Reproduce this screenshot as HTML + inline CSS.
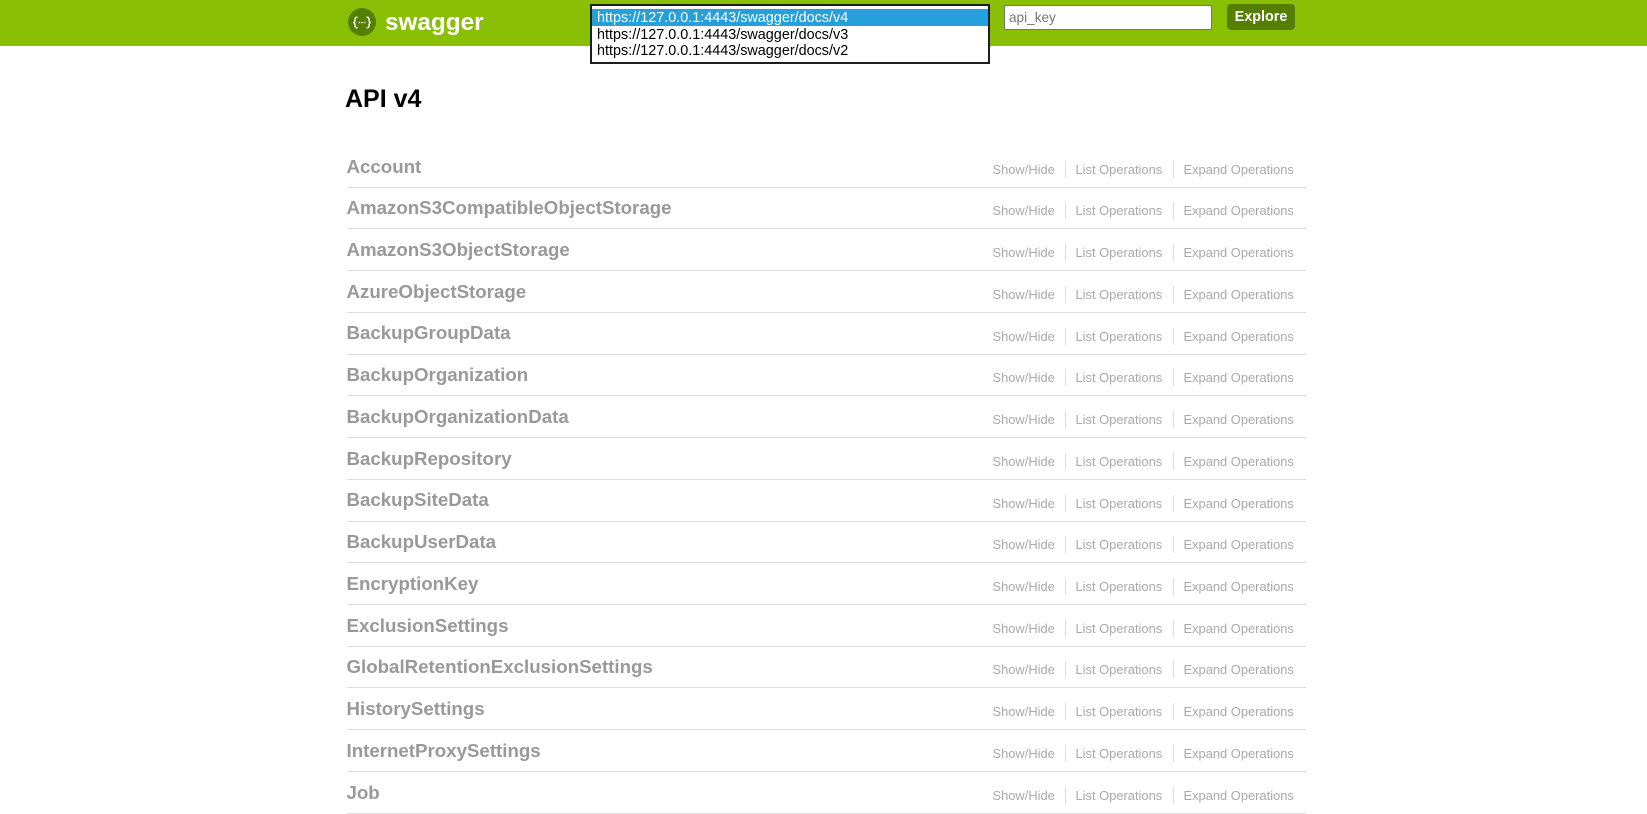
<!DOCTYPE html>
<html lang="en">
<head>
<meta charset="utf-8">
<title>Swagger UI</title>
<style>
html,body{margin:0;padding:0;width:1647px;height:814px;overflow:hidden;background:#fff;font-family:"Liberation Sans",sans-serif}
.hd{position:absolute;left:0;top:0;width:1647px;height:46px;background:#89bf04}
.logo{position:absolute;left:348px;top:8px;width:28px;height:28px}
.brand{position:absolute;left:385px;top:8px;font:bold 24.3px/30px "Liberation Sans",sans-serif;color:#fff}
.sel{position:absolute;left:590px;top:4px;width:396px;height:55.5px;border:2px solid #1e1e1e;background:#fff;font-size:14.4px;color:#000}
.sel div{height:16.5px;line-height:18px;padding-left:5px;white-space:nowrap}
.sel div:first-child{background:#26a0da;color:#fff;margin-top:3px}
.key{position:absolute;left:1004px;top:5px;width:202px;height:23px;border:1px solid #767676;background:#fff;padding-left:4px;font-size:13.6px;line-height:23px;color:#757575}
.ex{position:absolute;left:1227px;top:4px;width:68px;height:26px;background:#547f00;border-radius:4px;color:#fff;font:bold 14.4px/27px "Liberation Sans",sans-serif;text-align:center}
h1{position:absolute;left:345px;top:84px;margin:0;font:bold 25px/30px "Liberation Sans",sans-serif;color:#000}
.n{position:absolute;left:346.5px;font:bold 18.7px/22px "Liberation Sans",sans-serif;color:#999;white-space:nowrap}
.l{position:absolute;font-size:12.9px;line-height:16px;color:#aaa;white-space:nowrap}
.a{left:992.5px}.b{left:1075.5px}.c{left:1183.5px}
.s{position:absolute;width:1px;height:17px;background:#ddd}
.s1{left:1065px}.s2{left:1173px}
.line{position:absolute;left:347px;width:959px;height:1px;background:#ddd}
</style>
</head>
<body>
<div class="hd"></div>
<svg class="logo" width="28" height="28" viewBox="0 0 28 28"><circle cx="14" cy="14" r="14" fill="#547f00"/><g fill="none" stroke="#fff" stroke-width="1.4" stroke-linecap="round"><path d="M9 9.2C7.2 9.2 7 10 7 11.6C7 13.2 6.8 14.3 5.4 14.5C6.8 14.7 7 15.8 7 17.4C7 19 7.2 19.8 9 19.8"/><path d="M19 9.2C20.8 9.2 21 10 21 11.6C21 13.2 21.2 14.3 22.6 14.5C21.2 14.7 21 15.8 21 17.4C21 19 20.8 19.8 19 19.8"/></g><g fill="#fff"><circle cx="11.4" cy="14.5" r=".8"/><circle cx="14" cy="14.5" r=".8"/><circle cx="16.6" cy="14.5" r=".8"/></g></svg>
<div class="brand">swagger</div>
<div class="sel"><div>https://127.0.0.1:4443/swagger/docs/v4</div><div>https://127.0.0.1:4443/swagger/docs/v3</div><div>https://127.0.0.1:4443/swagger/docs/v2</div></div>
<div class="key">api_key</div>
<div class="ex">Explore</div>
<h1>API v4</h1>

<div class="n" style="top:156px">Account</div><div class="l a" style="top:162px">Show/Hide</div><div class="s s1" style="top:161px"></div><div class="l b" style="top:162px">List Operations</div><div class="s s2" style="top:161px"></div><div class="l c" style="top:162px">Expand Operations</div><div class="line" style="top:187px"></div>
<div class="n" style="top:197px">AmazonS3CompatibleObjectStorage</div><div class="l a" style="top:203px">Show/Hide</div><div class="s s1" style="top:202px"></div><div class="l b" style="top:203px">List Operations</div><div class="s s2" style="top:202px"></div><div class="l c" style="top:203px">Expand Operations</div><div class="line" style="top:228px"></div>
<div class="n" style="top:239px">AmazonS3ObjectStorage</div><div class="l a" style="top:245px">Show/Hide</div><div class="s s1" style="top:244px"></div><div class="l b" style="top:245px">List Operations</div><div class="s s2" style="top:244px"></div><div class="l c" style="top:245px">Expand Operations</div><div class="line" style="top:270px"></div>
<div class="n" style="top:281px">AzureObjectStorage</div><div class="l a" style="top:287px">Show/Hide</div><div class="s s1" style="top:286px"></div><div class="l b" style="top:287px">List Operations</div><div class="s s2" style="top:286px"></div><div class="l c" style="top:287px">Expand Operations</div><div class="line" style="top:312px"></div>
<div class="n" style="top:322px">BackupGroupData</div><div class="l a" style="top:329px">Show/Hide</div><div class="s s1" style="top:328px"></div><div class="l b" style="top:329px">List Operations</div><div class="s s2" style="top:328px"></div><div class="l c" style="top:329px">Expand Operations</div><div class="line" style="top:354px"></div>
<div class="n" style="top:364px">BackupOrganization</div><div class="l a" style="top:370px">Show/Hide</div><div class="s s1" style="top:369px"></div><div class="l b" style="top:370px">List Operations</div><div class="s s2" style="top:369px"></div><div class="l c" style="top:370px">Expand Operations</div><div class="line" style="top:395px"></div>
<div class="n" style="top:406px">BackupOrganizationData</div><div class="l a" style="top:412px">Show/Hide</div><div class="s s1" style="top:411px"></div><div class="l b" style="top:412px">List Operations</div><div class="s s2" style="top:411px"></div><div class="l c" style="top:412px">Expand Operations</div><div class="line" style="top:437px"></div>
<div class="n" style="top:448px">BackupRepository</div><div class="l a" style="top:454px">Show/Hide</div><div class="s s1" style="top:453px"></div><div class="l b" style="top:454px">List Operations</div><div class="s s2" style="top:453px"></div><div class="l c" style="top:454px">Expand Operations</div><div class="line" style="top:479px"></div>
<div class="n" style="top:489px">BackupSiteData</div><div class="l a" style="top:496px">Show/Hide</div><div class="s s1" style="top:495px"></div><div class="l b" style="top:496px">List Operations</div><div class="s s2" style="top:495px"></div><div class="l c" style="top:496px">Expand Operations</div><div class="line" style="top:521px"></div>
<div class="n" style="top:531px">BackupUserData</div><div class="l a" style="top:537px">Show/Hide</div><div class="s s1" style="top:536px"></div><div class="l b" style="top:537px">List Operations</div><div class="s s2" style="top:536px"></div><div class="l c" style="top:537px">Expand Operations</div><div class="line" style="top:562px"></div>
<div class="n" style="top:573px">EncryptionKey</div><div class="l a" style="top:579px">Show/Hide</div><div class="s s1" style="top:578px"></div><div class="l b" style="top:579px">List Operations</div><div class="s s2" style="top:578px"></div><div class="l c" style="top:579px">Expand Operations</div><div class="line" style="top:604px"></div>
<div class="n" style="top:615px">ExclusionSettings</div><div class="l a" style="top:621px">Show/Hide</div><div class="s s1" style="top:620px"></div><div class="l b" style="top:621px">List Operations</div><div class="s s2" style="top:620px"></div><div class="l c" style="top:621px">Expand Operations</div><div class="line" style="top:646px"></div>
<div class="n" style="top:656px">GlobalRetentionExclusionSettings</div><div class="l a" style="top:662px">Show/Hide</div><div class="s s1" style="top:661px"></div><div class="l b" style="top:662px">List Operations</div><div class="s s2" style="top:661px"></div><div class="l c" style="top:662px">Expand Operations</div><div class="line" style="top:687px"></div>
<div class="n" style="top:698px">HistorySettings</div><div class="l a" style="top:704px">Show/Hide</div><div class="s s1" style="top:703px"></div><div class="l b" style="top:704px">List Operations</div><div class="s s2" style="top:703px"></div><div class="l c" style="top:704px">Expand Operations</div><div class="line" style="top:729px"></div>
<div class="n" style="top:740px">InternetProxySettings</div><div class="l a" style="top:746px">Show/Hide</div><div class="s s1" style="top:745px"></div><div class="l b" style="top:746px">List Operations</div><div class="s s2" style="top:745px"></div><div class="l c" style="top:746px">Expand Operations</div><div class="line" style="top:771px"></div>
<div class="n" style="top:782px">Job</div><div class="l a" style="top:788px">Show/Hide</div><div class="s s1" style="top:787px"></div><div class="l b" style="top:788px">List Operations</div><div class="s s2" style="top:787px"></div><div class="l c" style="top:788px">Expand Operations</div><div class="line" style="top:813px"></div>
</body>
</html>
